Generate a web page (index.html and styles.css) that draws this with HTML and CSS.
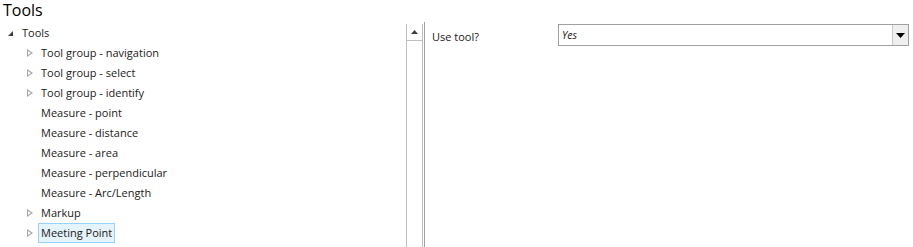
FILE: index.html
```html
<!DOCTYPE html>
<html lang="en">
<head>
  <meta charset="UTF-8" />
  <title>Tools</title>
  <link rel="stylesheet" href="styles.css">
</head>
<body>
  <h1 class="title">Tools</h1>

  <div class="panes">
    <div class="tree">
      <div class="row root">
        <span class="toggle open"></span>
        <span class="label">Tools</span>
      </div>
      <div class="children">
        <div class="row"><span class="toggle closed"></span><span class="label">Tool group - navigation</span></div>
        <div class="row"><span class="toggle closed"></span><span class="label">Tool group - select</span></div>
        <div class="row"><span class="toggle closed"></span><span class="label">Tool group - identify</span></div>
        <div class="row"><span class="toggle"></span><span class="label">Measure - point</span></div>
        <div class="row"><span class="toggle"></span><span class="label">Measure - distance</span></div>
        <div class="row"><span class="toggle"></span><span class="label">Measure - area</span></div>
        <div class="row"><span class="toggle"></span><span class="label">Measure - perpendicular</span></div>
        <div class="row"><span class="toggle"></span><span class="label">Measure - Arc/Length</span></div>
        <div class="row"><span class="toggle closed"></span><span class="label">Markup</span></div>
        <div class="row"><span class="toggle closed"></span><span class="label selected">Meeting Point</span></div>
      </div>
    </div>

    <div class="scrollbar">
      <div class="scroll-btn">
        <svg width="7" height="4" viewBox="0 0 7 4"><path d="M0 4 L3.5 0 L7 4 Z" fill="#404040"/></svg>
      </div>
    </div>

    <div class="props">
      <div class="prop">
        <span class="prop-name">Use tool?</span>
        <div class="select">
          <span class="select-value">Yes</span>
          <span class="select-btn">
            <svg width="9" height="5" viewBox="0 0 9 5"><path d="M0 0 L9 0 L4.5 5 Z" fill="#000"/></svg>
          </span>
        </div>
      </div>
    </div>
  </div>
</body>
</html>
```

FILE: styles.css
```css
body {
  margin: 0;
  font-family: 'Open Sans', 'Noto Sans', sans-serif;
  color: #1a1a1a;
  background: #fff;
  width: 913px;
  height: 247px;
  overflow: hidden;
}

.title {
  margin: 0;
  padding: 0 0 0 3px;
  height: 22px;
  font-size: 16px;
  font-weight: 400;
  line-height: 21px;
  color: #000;
}

.panes {
  display: flex;
  height: 225px;
}

.tree {
  width: 406px;
  padding-top: 1px;
  font-size: 11px;
}

.row {
  display: flex;
  align-items: center;
  height: 20px;
}

.root {
  padding-left: 7px;
}

.children .row {
  padding-left: 26px;
}

.toggle {
  width: 15px;
  height: 20px;
  position: relative;
  flex: none;
}

/* expanded: small filled corner triangle */
.toggle.open::before {
  content: "";
  position: absolute;
  left: 1px;
  top: 8px;
  border-style: solid;
  border-width: 0 0 5px 5px;
  border-color: transparent transparent #404040 transparent;
}

/* collapsed: hollow right-pointing triangle */
.toggle.closed::before {
  content: "";
  position: absolute;
  left: 1px;
  top: 6px;
  width: 0;
  height: 0;
  border-style: solid;
  border-width: 4.5px 0 4.5px 6px;
  border-color: transparent transparent transparent #a6a6a6;
}

.toggle.closed::after {
  content: "";
  position: absolute;
  left: 2px;
  top: 8px;
  border-style: solid;
  border-width: 2.5px 0 2.5px 3.3px;
  border-color: transparent transparent transparent #fff;
}

.label {
  padding: 1px 2px;
  line-height: 16px;
  border: 1px solid transparent;
  margin-left: -3px;
}

.label.selected {
  background: #e5f3fb;
  border-color: #99d1ff;
}

.scrollbar {
  width: 15px;
  height: 223px;
  margin-top: 2px;
  border-left: 1px solid #c0c0c0;
  border-right: 1px solid #c0c0c0;
}

.scroll-btn {
  height: 16px;
  border-bottom: 1px solid #c0c0c0;
  display: flex;
  align-items: center;
  justify-content: center;
}

.props {
  flex: 1;
  border-left: 1px solid #a0a0a0;
  margin-left: 1px;
  padding: 2px 4px 0 7px;
}

.prop {
  display: flex;
  align-items: center;
  height: 22px;
  font-size: 11px;
}

.prop-name {
  width: 126px;
  padding-top: 2px;
}

.select {
  flex: 1;
  display: flex;
  height: 20px;
  border: 1px solid #a0a0a0;
}

.select-value {
  flex: 1;
  font-style: italic;
  font-size: 10.5px;
  line-height: 20px;
  padding-left: 3px;
}

.select-btn {
  width: 15px;
  border-left: 1px solid #c8c8c8;
  background: #efefef;
  display: flex;
  align-items: center;
  justify-content: center;
}
```
